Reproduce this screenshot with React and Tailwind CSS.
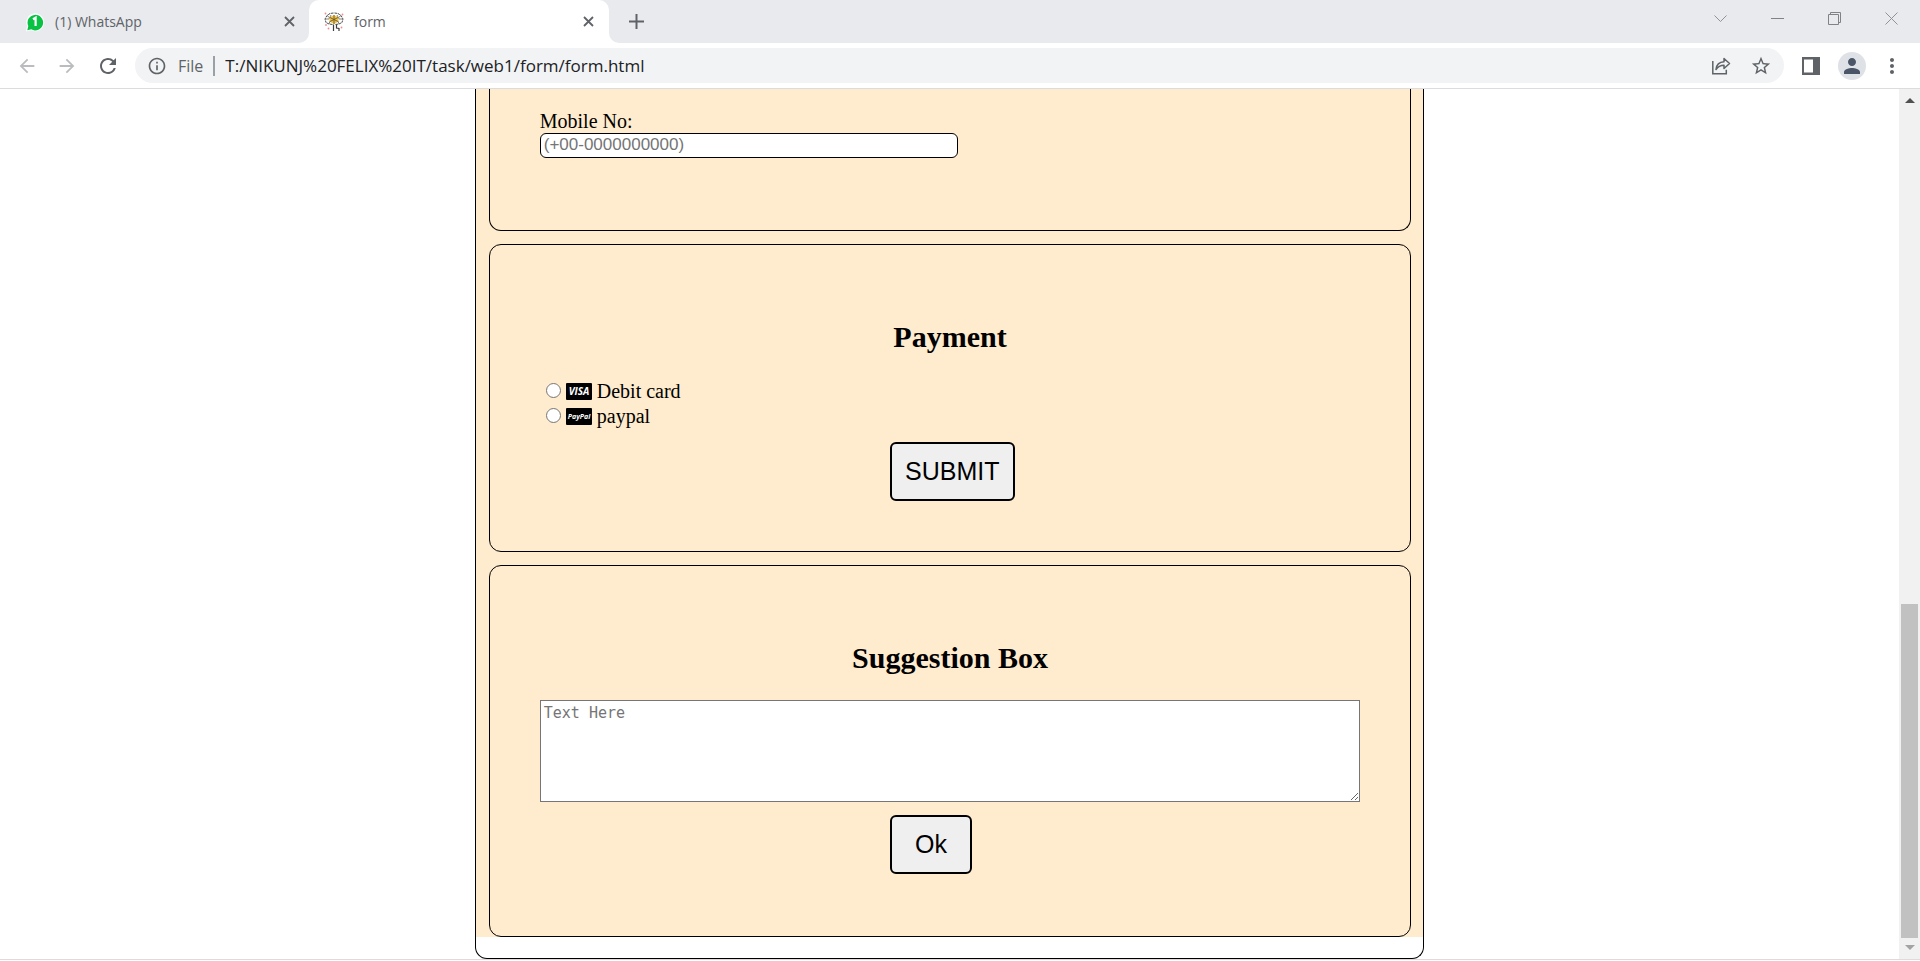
import React from "react";
import {
  MdArrowBack,
  MdArrowForward,
  MdRefresh,
  MdInfoOutline,
  MdStarBorder,
  MdMoreVert,
  MdPerson,
} from "react-icons/md";

const uiFont = "font-['Open_Sans','Noto_Sans',sans-serif]";

function CloseMark() {
  return (
    <svg viewBox="0 0 11 11" className="size-[11px]" fill="none" stroke="#5f6368" strokeWidth="1.800">
      <path d="M1 1l9 9M10 1l-9 9" />
    </svg>
  );
}

function WhatsAppIcon() {
  return (
    <svg viewBox="0 0 20 20" className="size-5 shrink-0">
      <path d="M1 19.500l1-5.500A9 9 0 1 1 6 18.300z" fill="#fff" />
      <path d="M2.300 18.300l1-4.300A7.800 7.800 0 1 1 6.300 17.300z" fill="#09c143" />
      <path d="M8 7.300l2.600-1.600V14" fill="none" stroke="#fff" strokeWidth="2.200" />
    </svg>
  );
}

function BrainIcon() {
  return (
    <svg viewBox="0 0 20 20" className="size-5 shrink-0" fill="none" strokeWidth="1">
      <path
        stroke="#4a4a4a"
        strokeDasharray="2.500 0.700"
        d="M9.500 1L6 1.500 3 3.500 1 7l1 3.500L5 12l3.500.5M10.500 1L14 1.500l3 2L19 7l-1 3.500-3 1.500-3.500.5"
      />
      <path stroke="#77746a" strokeWidth="0.900" d="M1 7h4l2-4M3 3.500L6 6M19 7h-4l-2-4M17 3.500L14 6M5 12l1-3M15 12l-1-3" />
      <path d="M10 3l4.500 2.500v4L10 12l-4.500-2.500v-4z" fill="#efc04a" />
      <path stroke="#6b5a2a" strokeWidth="0.900" d="M10 3v9M6 5.500l8 4M14 5.500l-8 4" />
      <path stroke="#3c3c3c" strokeWidth="1.200" d="M9.500 12.500V19M12.500 12.500V16l2.500.5V19" />
      <g fill="#f38b92">
        <circle cx="1.500" cy="1.500" r="0.900" />
        <circle cx="18.500" cy="2.500" r="0.900" />
        <circle cx="2" cy="13" r="0.900" />
        <circle cx="4.500" cy="16.500" r="0.900" />
        <circle cx="17.500" cy="15.500" r="0.900" />
      </g>
    </svg>
  );
}

function ShareIcon() {
  return (
    <svg viewBox="0 0 20 20" className="size-5" fill="none" stroke="#5f6368" strokeWidth="1.500">
      <path d="M1.800 5v12.700h13.500v-4" />
      <path strokeLinejoin="round" d="M5 13.500C5.500 8.500 8.500 6 13 5.800V2.500l5.500 5-5.500 5V9.300C9.500 9.300 7 10.500 5 13.500z" />
    </svg>
  );
}

function CardBadge({ label, size }) {
  return (
    <svg viewBox="0 0 26 17" className="mr-[5px] h-[17px] w-[26px]" aria-hidden="true">
      <rect width="26" height="17" rx="1" fill="#000" />
      <text
        x="13"
        y={size > 8 ? 12 : 11}
        textAnchor="middle"
        fill="#fff"
        fontFamily="Open Sans, sans-serif"
        fontWeight="bold"
        fontStyle="italic"
        fontSize={size}
      >
        {label}
      </text>
    </svg>
  );
}

function TabStrip() {
  return (
    <header className="flex h-[43px] shrink-0 items-stretch bg-[#e8eaed] text-[14px] text-[#5f6368]">
      <div className="flex w-[309px] items-center pr-[14px] pl-[25px]">
        <WhatsAppIcon />
        <span className="ml-[10px] flex-1">(1) WhatsApp</span>
        <button aria-label="Close WhatsApp tab">
          <CloseMark />
        </button>
      </div>
      <div className="relative flex w-[300px] items-center rounded-t-[10px] bg-white pr-[15px] pl-[15px]">
        <svg viewBox="0 0 10 10" className="absolute bottom-0 -left-[10px] size-[10px]">
          <path d="M10 0v10H0A10 10 0 0 0 10 0z" fill="#fff" />
        </svg>
        <svg viewBox="0 0 10 10" className="absolute -right-[10px] bottom-0 size-[10px]">
          <path d="M0 0v10h10A10 10 0 0 1 0 0z" fill="#fff" />
        </svg>
        <BrainIcon />
        <span className="ml-[10px] flex-1">form</span>
        <button aria-label="Close form tab">
          <CloseMark />
        </button>
      </div>
      <button aria-label="New tab" className="ml-5">
        <svg viewBox="0 0 15 15" className="size-[15px]" stroke="#5f6368" strokeWidth="2">
          <path d="M7.500 0v15M0 7.500h15" />
        </svg>
      </button>
      <div className="ml-auto flex items-start gap-[44px] pt-3 pr-[22px]">
        <button aria-label="Search tabs">
          <svg viewBox="0 0 13 13" className="size-[13px]" fill="none" stroke="#909296">
            <path d="M.5 3.500l6 6 6-6" />
          </svg>
        </button>
        <button aria-label="Minimize">
          <svg viewBox="0 0 13 13" className="size-[13px]" fill="none" stroke="#808286">
            <path d="M0 6.500h13" />
          </svg>
        </button>
        <button aria-label="Restore">
          <svg viewBox="0 0 13 13" className="size-[13px]" fill="none" stroke="#808286">
            <path d="M.5 2.500h10v10H.5zM2.500 2.500v-2h10v10h-2" />
          </svg>
        </button>
        <button aria-label="Close window">
          <svg viewBox="0 0 13 13" className="size-[13px]" fill="none" stroke="#909296">
            <path d="M.5.5l12 12M12.500.5l-12 12" />
          </svg>
        </button>
      </div>
    </header>
  );
}

function Toolbar() {
  return (
    <nav className="flex h-[46px] shrink-0 items-center border-b border-[#dadce0] bg-white pr-4 pl-4 text-[#5f6368]">
      <div className="flex gap-[18px]">
        <button aria-label="Back" className="text-[#babcbe]">
          <MdArrowBack size={22} />
        </button>
        <button aria-label="Forward" className="text-[#babcbe]">
          <MdArrowForward size={22} />
        </button>
        <button aria-label="Reload">
          <MdRefresh size={24} />
        </button>
      </div>
      <div className="ml-[15px] flex h-[35px] flex-1 items-center rounded-full bg-[#f1f3f4] pr-3 pl-3 text-[16px]">
        <MdInfoOutline size={20} />
        <span className="ml-[11px]">File</span>
        <span className="mx-[10px] h-5 w-[2px] bg-[#9aa0a6]" />
        <input
          aria-label="Address"
          className="min-w-0 flex-1 bg-transparent text-[17px] text-[#202124] outline-none"
          defaultValue="T:/NIKUNJ%20FELIX%20IT/task/web1/form/form.html"
        />
        <button aria-label="Share page">
          <ShareIcon />
        </button>
        <button aria-label="Bookmark this page" className="ml-[19px]">
          <MdStarBorder size={22} />
        </button>
      </div>
      <button aria-label="Side panel" className="ml-[18px]">
        <svg viewBox="0 0 18 18" className="size-[18px]">
          <path d="M0 0h18v18H0zM2 2.500v13h9v-13z" fill="#5f6368" fillRule="evenodd" />
        </svg>
      </button>
      <button
        aria-label="Profile"
        className="ml-[18px] flex size-7 items-center justify-center rounded-full bg-[#dee1e6] text-[#4a5568]"
      >
        <MdPerson size={24} />
      </button>
      <button aria-label="Menu" className="ml-[14px]">
        <MdMoreVert size={24} />
      </button>
    </nav>
  );
}

function Panel({ title, children }) {
  return (
    <section className="mt-[13px] rounded-[12px] border border-black px-[50px] pt-[50px] pb-[50px]">
      <h2 className="my-[25px] text-center text-[30px] leading-[34px] font-bold">{title}</h2>
      {children}
    </section>
  );
}

function PaymentOption({ id, text, label, size }) {
  return (
    <div className="flex h-[25px] items-center pl-[6px]">
      <input
        type="radio"
        id={id}
        name="payment"
        className="mr-[5px] mb-[2px] size-[15px] appearance-none rounded-full border border-[#767676] bg-white checked:border-4"
      />
      <label htmlFor={id} className="flex items-center leading-[25px]">
        <CardBadge label={label} size={size} />
        {text}
      </label>
    </div>
  );
}

const buttonClass =
  "ml-[42.7%] mt-[13px] block h-[59px] rounded-[6px] border-2 border-black bg-[#efefef] font-['Liberation_Sans',sans-serif] text-[25px]";

function FormPage() {
  return (
    <main className="min-w-0 flex-1 overflow-hidden bg-white font-['Liberation_Serif',serif] text-[20px] text-black">
      <div className="mx-auto w-1/2 rounded-b-[12px] border border-t-0 border-black pb-[21px]">
        <div className="bg-[#ffebcd] pr-3 pl-[13px]">
          <section className="rounded-b-[12px] border border-t-0 border-black px-[50px] pt-[21px] pb-[72px]">
            <label htmlFor="mobile" className="block leading-[23px]">
              Mobile No:
            </label>
            <input
              id="mobile"
              type="tel"
              placeholder="(+00-0000000000)"
              className="block h-[25px] w-[51%] rounded-[6px] border border-black bg-white px-[3px] pb-[2px] font-['Liberation_Sans',sans-serif] text-[17px] placeholder:text-[#757575]"
            />
          </section>
          <Panel title="Payment">
            <PaymentOption id="debit" text="Debit card" label="VISA" size={10} />
            <PaymentOption id="paypal" text="paypal" label="PayPal" size={7} />
            <button className={buttonClass + " px-[13px]"}>SUBMIT</button>
          </Panel>
          <Panel title="Suggestion Box">
            <textarea
              aria-label="Suggestion"
              placeholder="Text Here"
              className="block h-[102px] w-full resize rounded-none border border-[#767676] bg-white px-[3px] py-[3px] font-['DejaVu_Sans_Mono',monospace] text-[15px] leading-[19px] placeholder:text-[#757575]"
            />
            <button className={buttonClass + " mb-3 px-[23px]"}>Ok</button>
          </Panel>
        </div>
      </div>
    </main>
  );
}

function ScrollRail() {
  return (
    <div className="flex w-[21px] flex-col items-center bg-[#f1f1f1] py-[9px]">
      <svg viewBox="0 0 10 5" className="h-[5px] w-[10px]">
        <path d="M0 5l5-5 5 5z" fill="#505050" />
      </svg>
      <div className="flex min-h-0 w-[17px] flex-1 flex-col justify-end pb-[7px]">
        <div className="h-[40%] bg-[#c1c1c1]" />
      </div>
      <svg viewBox="0 0 10 5" className="h-[5px] w-[10px]">
        <path d="M0 0l5 5 5-5z" fill="#a3a3a3" />
      </svg>
    </div>
  );
}

export default function App() {
  return (
    <div className={"flex h-screen flex-col bg-white " + uiFont}>
      <TabStrip />
      <Toolbar />
      <div className="mb-px flex min-h-0 flex-1 border-b border-[#dadce0]">
        <FormPage />
        <ScrollRail />
      </div>
    </div>
  );
}
